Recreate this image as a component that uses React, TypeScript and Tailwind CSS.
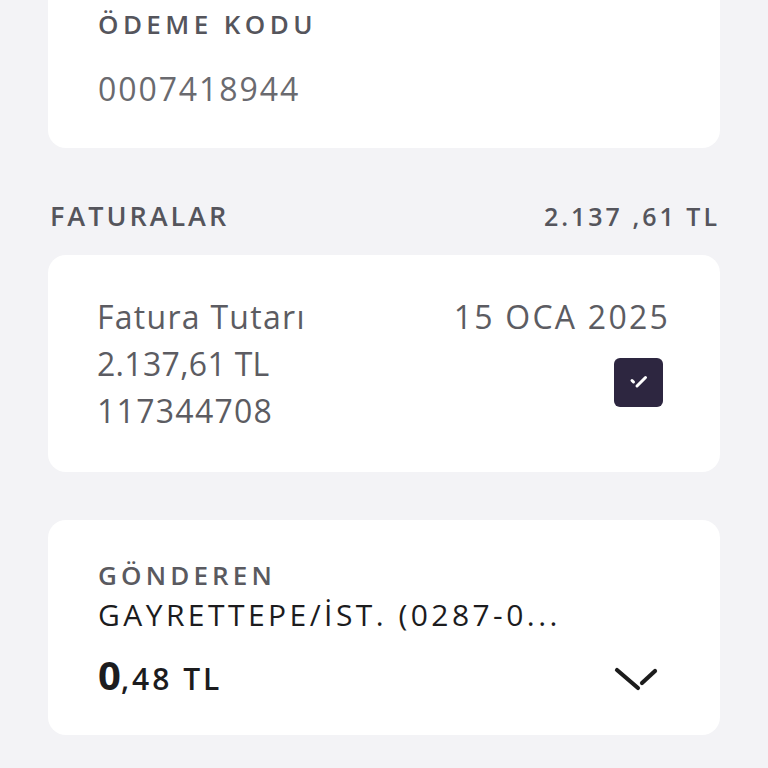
import { useState } from 'react';

const font = { fontFamily: '"Open Sans", "Noto Sans", sans-serif' };

const CheckBox = () => (
  <div className="w-[49px] h-[49px] rounded-[6px] bg-[#2d2640] flex items-center justify-center">
    <svg width="28" height="28" viewBox="0 0 28 28" fill="none">
      <path d="M7 12.5 L8.5 14" stroke="white" strokeWidth="3" strokeLinecap="round" />
      <path d="M12 18 L20.5 9.5" stroke="white" strokeWidth="3" strokeLinecap="round" />
    </svg>
  </div>
);

const Chevron = () => (
  <svg width="44" height="26" viewBox="0 0 44 26" fill="none">
    <path d="M3 3 L24 21" stroke="#1c1c1c" strokeWidth="4.2" strokeLinecap="round" />
    <path d="M28 16 L41 4" stroke="#1c1c1c" strokeWidth="4.2" strokeLinecap="round" />
  </svg>
);

export default function App() {
  const [checked] = useState(true);

  return (
    <div className="min-h-screen w-full bg-[#f3f3f6] px-12 pb-8" style={font}>
      {/* Ödeme kodu */}
      <div className="bg-white rounded-b-[18px] px-[50px] pt-[4px] h-[148px]">
        <div className="text-[26px] font-semibold tracking-[0.17em] text-[#55555c] leading-[40px]">ÖDEME KODU</div>
        <div className="mt-[24px] text-[32px] text-[#6a6a6f] tracking-[0.06em] leading-[42px]">0007418944</div>
      </div>

      {/* Faturalar header */}
      <div className="flex items-center justify-between mt-[48px] pl-[2px]">
        <span className="text-[27px] font-semibold tracking-[0.11em] text-[#55555c]">FATURALAR</span>
        <span className="text-[25px] font-semibold tracking-[0.12em] text-[#55555c]">2.137 ,61 TL</span>
      </div>

      {/* Fatura card */}
      <div className="bg-white rounded-[18px] mt-[18px] h-[217px] pl-[49px] pr-[50px] pt-[38px] flex justify-between">
        <div className="flex flex-col text-[32px] text-[#5c5c62] leading-[47px]">
          <span className="tracking-[0.04em]">Fatura Tutarı</span>
          <span className="tracking-[0.01em]">2.137,61 TL</span>
          <span className="tracking-[0.04em]">117344708</span>
        </div>
        <div className="flex flex-col items-end">
          <span className="text-[32px] text-[#5c5c62] leading-[47px] tracking-[0.07em]">15 OCA 2025</span>
          {checked && (
            <div className="mt-[18px] mr-[7px]">
              <CheckBox />
            </div>
          )}
        </div>
      </div>

      {/* Gönderen card */}
      <div className="bg-white rounded-[18px] mt-[48px] h-[215px] pl-[50px] pr-[62px] pt-[36px]">
        <div className="text-[26px] font-semibold tracking-[0.16em] text-[#5a5a60] leading-[38px]">GÖNDEREN</div>
        <div className="text-[30px] text-[#1c1c1e] tracking-[0.115em] leading-[42px] whitespace-nowrap">GAYRETTEPE/İST. (0287-0...</div>
        <div className="flex items-center justify-between mt-[9px]">
          <span className="text-[#1c1c1e]">
            <span className="text-[40px] font-bold">0</span>
            <span className="text-[30px] font-semibold tracking-[0.1em]">,48 TL</span>
          </span>
          <div className="mt-[10px]">
            <Chevron />
          </div>
        </div>
      </div>
    </div>
  );
}
